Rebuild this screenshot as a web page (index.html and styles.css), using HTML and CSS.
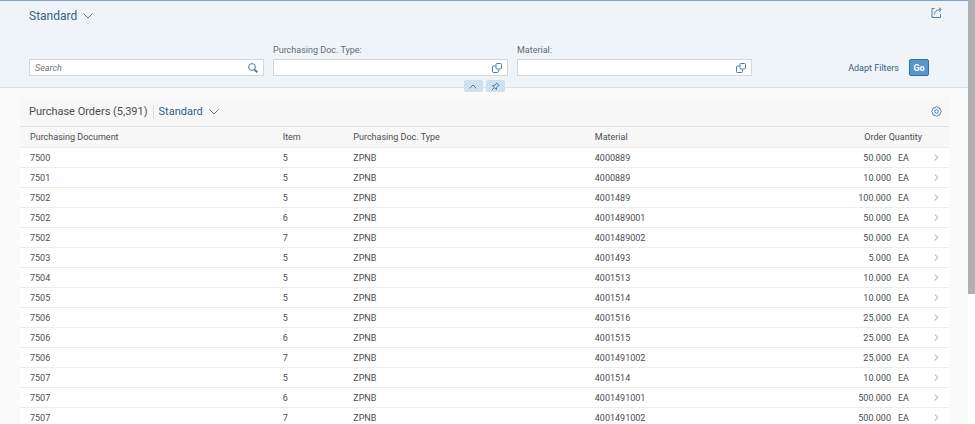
FILE: index.html
```html
<!DOCTYPE html>
<html lang="en">
<head>
    <meta charset="UTF-8">
    <meta name="viewport" content="width=device-width, initial-scale=1.0">
    <title>Purchase Orders</title>
    <link rel="stylesheet" href="styles.css">
</head>
<body>
    <svg class="sprite" aria-hidden="true">
        <symbol id="chevron-down" viewBox="0 0 10 6"><path d="M.5.5 5 5 9.500.5"/></symbol>
        <symbol id="value-help" viewBox="0 0 10 10"><path d="M3.500 3H1.500a1 1 0 0 0-1 1v4.500a1 1 0 0 0 1 1h4a1 1 0 0 0 1-1V7"/><rect x="4" y=".5" width="5.500" height="5.500" rx="1"/></symbol>
        <symbol id="nav" viewBox="0 0 5 7"><path d="M.7.5 4 3.500.7 6.500"/></symbol>
    </svg>
    <div class="page">
        <header class="header">
            <div class="title-bar">
                <button class="variant">Standard <svg class="icon arrow"><use href="#chevron-down"/></svg></button>
                <button class="icon-button" aria-label="Share">
                    <svg class="icon share" viewBox="0 0 11 11"><path d="M3.500 1.500H1v9h8.500V7.500M3.500 7.500C3.700 4.500 5.500 2.700 9.500 2.700M8 .7l2.300 2L8 4.700"/></svg>
                </button>
            </div>
            <form class="filters">
                <div class="field">
                    <div class="input-box">
                        <input class="search" type="text" placeholder="Search" aria-label="Search">
                        <svg class="icon glass" viewBox="0 0 10 10"><circle cx="4" cy="4" r="3.400"/><path class="handle" d="M6.600 6.600 9.300 9.300"/></svg>
                    </div>
                </div>
                <div class="field">
                    <label for="doc-type">Purchasing Doc. Type:</label>
                    <div class="input-box">
                        <input id="doc-type" type="text">
                        <svg class="icon help"><use href="#value-help"/></svg>
                    </div>
                </div>
                <div class="field">
                    <label for="material">Material:</label>
                    <div class="input-box">
                        <input id="material" type="text">
                        <svg class="icon help"><use href="#value-help"/></svg>
                    </div>
                </div>
                <div class="actions">
                    <button class="adapt" type="button">Adapt Filters</button>
                    <button class="go" type="button">Go</button>
                </div>
            </form>
            <div class="header-toggle">
                <button aria-label="Collapse header"><svg class="icon up" viewBox="0 0 8 5"><path d="M.7 4.300 4 1l3.300 3.300"/></svg></button>
                <button aria-label="Pin header"><svg class="icon pin" viewBox="0 0 9 9"><path d="M5.300.7 8.300 3.700M5.800 1.200 3.900 3.200 1.500 3.700 5.300 7.500 5.800 5.100 7.800 3.200M3.300 5.700.7 8.300"/></svg></button>
            </div>
        </header>
        <main class="content">
            <div class="toolbar">
                <h2>Purchase Orders (5,391)</h2>
                <button class="variant small">Standard <svg class="icon arrow"><use href="#chevron-down"/></svg></button>
                <button class="icon-button" aria-label="Settings">
                    <svg class="icon gear" viewBox="0 0 11 11"><path d="M5.500.6 6.900 1.600 8.900 2.100 9.400 4.100 10.400 5.500 9.400 6.900 8.900 8.900 6.900 9.400 5.500 10.400 4.100 9.400 2.100 8.900 1.600 6.900.6 5.500 1.600 4.100 2.100 2.100 4.100 1.600Z"/><circle cx="5.500" cy="5.500" r="1.800"/></svg>
                </button>
            </div>
            <table class="orders">
                <colgroup>
                    <col class="doc"><col class="item"><col class="type"><col><col class="amount"><col class="uom"><col class="go-to">
                </colgroup>
                <thead>
                    <tr><th>Purchasing Document</th><th>Item</th><th>Purchasing Doc. Type</th><th>Material</th><th class="num" colspan="2">Order Quantity</th><th></th></tr>
                </thead>
                <tbody>
                    <tr><td>7500</td><td>5</td><td>ZPNB</td><td>4000889</td><td class="num">50.000</td><td class="unit">EA</td><td><svg class="icon nav"><use href="#nav"/></svg></td></tr>
                    <tr><td>7501</td><td>5</td><td>ZPNB</td><td>4000889</td><td class="num">10.000</td><td class="unit">EA</td><td><svg class="icon nav"><use href="#nav"/></svg></td></tr>
                    <tr><td>7502</td><td>5</td><td>ZPNB</td><td>4001489</td><td class="num">100.000</td><td class="unit">EA</td><td><svg class="icon nav"><use href="#nav"/></svg></td></tr>
                    <tr><td>7502</td><td>6</td><td>ZPNB</td><td>4001489001</td><td class="num">50.000</td><td class="unit">EA</td><td><svg class="icon nav"><use href="#nav"/></svg></td></tr>
                    <tr><td>7502</td><td>7</td><td>ZPNB</td><td>4001489002</td><td class="num">50.000</td><td class="unit">EA</td><td><svg class="icon nav"><use href="#nav"/></svg></td></tr>
                    <tr><td>7503</td><td>5</td><td>ZPNB</td><td>4001493</td><td class="num">5.000</td><td class="unit">EA</td><td><svg class="icon nav"><use href="#nav"/></svg></td></tr>
                    <tr><td>7504</td><td>5</td><td>ZPNB</td><td>4001513</td><td class="num">10.000</td><td class="unit">EA</td><td><svg class="icon nav"><use href="#nav"/></svg></td></tr>
                    <tr><td>7505</td><td>5</td><td>ZPNB</td><td>4001514</td><td class="num">10.000</td><td class="unit">EA</td><td><svg class="icon nav"><use href="#nav"/></svg></td></tr>
                    <tr><td>7506</td><td>5</td><td>ZPNB</td><td>4001516</td><td class="num">25.000</td><td class="unit">EA</td><td><svg class="icon nav"><use href="#nav"/></svg></td></tr>
                    <tr><td>7506</td><td>6</td><td>ZPNB</td><td>4001515</td><td class="num">25.000</td><td class="unit">EA</td><td><svg class="icon nav"><use href="#nav"/></svg></td></tr>
                    <tr><td>7506</td><td>7</td><td>ZPNB</td><td>4001491002</td><td class="num">25.000</td><td class="unit">EA</td><td><svg class="icon nav"><use href="#nav"/></svg></td></tr>
                    <tr><td>7507</td><td>5</td><td>ZPNB</td><td>4001514</td><td class="num">10.000</td><td class="unit">EA</td><td><svg class="icon nav"><use href="#nav"/></svg></td></tr>
                    <tr><td>7507</td><td>6</td><td>ZPNB</td><td>4001491001</td><td class="num">500.000</td><td class="unit">EA</td><td><svg class="icon nav"><use href="#nav"/></svg></td></tr>
                    <tr><td>7507</td><td>7</td><td>ZPNB</td><td>4001491002</td><td class="num">500.000</td><td class="unit">EA</td><td><svg class="icon nav"><use href="#nav"/></svg></td></tr>
                </tbody>
            </table>
        </main>
    </div>
    <div class="scrollbar"><div class="thumb"></div></div>
</body>
</html>
```
FILE: styles.css
```css
* {
    box-sizing: border-box;
}
body {
    margin: 0;
    height: 100vh;
    display: flex;
    overflow: hidden;
    background-color: #fafafa;
    color: #4b4d4f;
    font-family: Roboto, "Noto Sans", sans-serif;
    font-size: 9px;
}
button, input {
    font-family: inherit;
    font-size: 9px;
    margin: 0;
}
button {
    border: none;
    padding: 0;
    background: none;
    color: #346187;
    cursor: pointer;
}
.sprite {
    position: absolute;
    width: 0;
    height: 0;
}
.icon {
    display: block;
    fill: none;
    stroke: #4f7ba3;
    stroke-width: 1;
}
.page {
    flex: 1;
    min-width: 0;
}

/* header with the filter bar */
.header {
    position: relative;
    padding: 6px 26px 11px 29px;
    background-color: #eff4f9;
    border-top: 1px solid #7ba3cc;
    border-bottom: 1px solid #d3e2f0;
}
.title-bar {
    display: flex;
    justify-content: space-between;
    align-items: flex-start;
    height: 37px;
}
.variant {
    display: flex;
    align-items: center;
    gap: 6px;
    font-size: 12px;
    line-height: 18px;
}
.arrow {
    width: 10px;
    height: 6px;
}
.share, .gear {
    width: 11px;
    height: 11px;
}
.filters {
    display: flex;
    align-items: flex-end;
    gap: 9px;
}
.field {
    flex: 0 1 235px;
}
.field label {
    display: block;
    line-height: 12px;
    margin-bottom: 3px;
    color: #66696c;
}
.input-box {
    display: flex;
    align-items: center;
    height: 17px;
    padding: 0 5px;
    background-color: white;
    border: 1px solid #d3d7db;
}
.input-box input {
    flex: 1;
    min-width: 0;
    padding: 0;
    border: none;
    outline: none;
    background: none;
}
.search::placeholder {
    color: #727476;
    font-style: italic;
}
.glass, .help {
    width: 10px;
    height: 10px;
}
.handle {
    stroke-width: 2;
}
.actions {
    display: flex;
    align-items: center;
    gap: 10px;
    margin-left: auto;
    padding-right: 13px;
}
.go {
    width: 20px;
    height: 17px;
    border: 1px solid #346f9f;
    border-radius: 2px;
    background-color: #5596cd;
    color: white;
    font-weight: bold;
}
/* sits over the header's bottom edge */
.header-toggle {
    position: absolute;
    left: 0;
    right: 0;
    bottom: -5px;
    display: flex;
    justify-content: center;
    gap: 3px;
}
.header-toggle button {
    display: flex;
    align-items: center;
    justify-content: center;
    width: 19px;
    height: 12px;
    border-radius: 2px;
    background-color: #cfe0ef;
}
.up {
    width: 8px;
    height: 5px;
}
.pin {
    width: 9px;
    height: 9px;
}

/* orders list */
.content {
    margin: 9px 19px 0 20px;
}
.toolbar {
    display: flex;
    align-items: center;
    height: 30px;
    padding: 0 7px 0 9px;
    background-color: #f7f7f7;
    border-bottom: 1px solid #e2e2e2;
}
.toolbar h2 {
    margin: 0;
    padding-right: 5px;
    border-right: 1px solid #dedede;
    font-size: 11px;
    line-height: 14px;
    font-weight: normal;
}
.toolbar .icon-button {
    margin-left: auto;
}
.small {
    margin-left: 5px;
    font-size: 11px;
}
.orders {
    width: 100%;
    table-layout: fixed;
    border-collapse: separate;
    border-spacing: 0;
}
.orders th, .orders td {
    height: 20px;
    padding: 0 0 0 10px;
    border-bottom: 1px solid #ededed;
    text-align: left;
    font-weight: normal;
}
.orders th {
    height: 21px;
    background-color: #f7f7f7;
}
.orders td {
    background-color: white;
}
.doc {
    width: 27.2%;
}
.item {
    width: 7.6%;
}
.type {
    width: 26%;
}
.amount {
    width: 70px;
}
.uom {
    width: 31px;
}
.go-to {
    width: 27px;
}
.orders .num {
    text-align: right;
}
.orders .unit {
    padding-left: 7px;
}
.nav {
    width: 5px;
    height: 7px;
    margin-left: 2px;
    stroke: #a0a0a0;
}

.scrollbar {
    width: 7px;
    background-color: white;
}
.thumb {
    height: 69.3%;
    background-color: #b0b0b0;
}
```
